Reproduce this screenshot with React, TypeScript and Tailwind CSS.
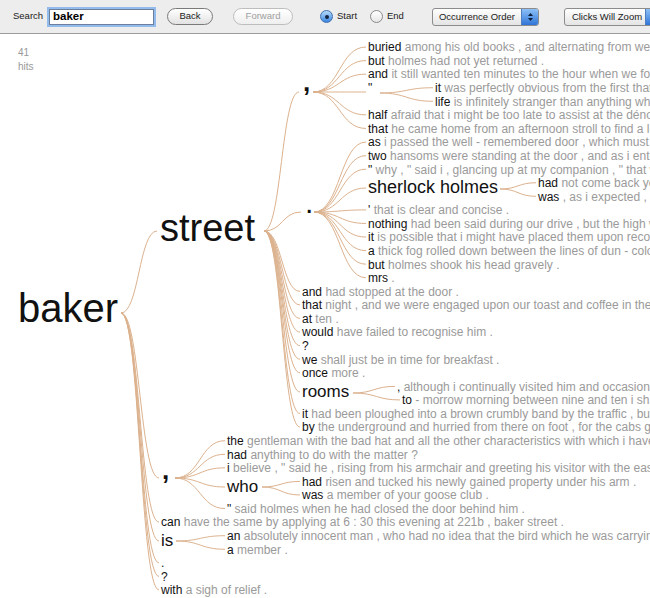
import React from 'react';

// word tree for "baker" — rows are laid out on a fixed 13.575px grid
const TOP = 34;
const ROW0 = 51.5;
const STEP = 13.575;
const base = (row: number) => ROW0 + (row - 1) * STEP;
const ASC = 0.8465; // baseline offset for leading-none Liberation Sans

type Pt = [number, number];

// out-anchors of every branching node
const OUT: Record<string, Pt> = {
  baker: [121, 313],
  street: [264, 231],
  comma1: [313, 92],
  quote: [380, 93],
  period: [314, 212],
  sherlock: [500, 189],
  rooms: [353, 393],
  comma2: [175, 478],
  who: [262, 487],
  is: [176, 541],
};

type Branch = { text: string; x: number; baseline: number; size: number; from: string; to: Pt; bold?: boolean };

const BRANCHES: Branch[] = [
  { text: 'street', x: 160, baseline: 241, size: 38, from: 'baker', to: [157, 231] },
  { text: ',', x: 303, baseline: 91, size: 26, from: 'street', to: [299, 92], bold: true },
  { text: '.', x: 305, baseline: 213, size: 30, from: 'street', to: [301, 212] },
  { text: 'sherlock holmes', x: 368, baseline: 193, size: 18, from: 'period', to: [366, 188] },
  { text: 'rooms', x: 302, baseline: 397, size: 17, from: 'street', to: [300, 392] },
  { text: ',', x: 162, baseline: 479, size: 26, from: 'baker', to: [159, 478], bold: true },
  { text: 'who', x: 227, baseline: 492, size: 17, from: 'comma2', to: [225, 487] },
  { text: 'is', x: 161, baseline: 546, size: 17, from: 'baker', to: [159, 541] },
];

type Leaf = { row: number; x: number; head: string; rest?: string; from: string; to?: Pt };

const LEAVES: Leaf[] = [
  { row: 1, x: 368, from: 'comma1', head: 'buried', rest: 'among his old books , and alternating from week to week between cocaine and ambition' },
  { row: 2, x: 368, from: 'comma1', head: 'but', rest: 'holmes had not yet returned .' },
  { row: 3, x: 368, from: 'comma1', head: 'and', rest: 'it still wanted ten minutes to the hour when we found ourselves in baker street' },
  { row: 4, x: 368, from: 'comma1', head: '"', to: [366, 92] },
  { row: 4, x: 435, from: 'quote', head: 'it', rest: 'was perfectly obvious from the first that there was something wrong' },
  { row: 5, x: 435, from: 'quote', head: 'life', rest: 'is infinitely stranger than anything which the mind of man could invent' },
  { row: 6, x: 368, from: 'comma1', head: 'half', rest: 'afraid that i might be too late to assist at the dénouement of the little mystery' },
  { row: 7, x: 368, from: 'comma1', head: 'that', rest: 'he came home from an afternoon stroll to find a letter on the table' },
  { row: 8, x: 368, from: 'period', head: 'as', rest: 'i passed the well - remembered door , which must always be associated in my mind' },
  { row: 9, x: 368, from: 'period', head: 'two', rest: 'hansoms were standing at the door , and as i entered the passage' },
  { row: 10, x: 368, from: 'period', head: '"', rest: 'why , " said i , glancing up at my companion , " that was surely' },
  { row: 11, x: 538, from: 'sherlock', head: 'had', rest: 'not come back yet .' },
  { row: 12, x: 538, from: 'sherlock', head: 'was', rest: ', as i expected , sitting in his armchair' },
  { row: 13, x: 368, from: 'period', head: "'", rest: 'that is clear and concise .' },
  { row: 14, x: 368, from: 'period', head: 'nothing', rest: 'had been said during our drive , but the high windows' },
  { row: 15, x: 368, from: 'period', head: 'it', rest: 'is possible that i might have placed them upon record' },
  { row: 16, x: 368, from: 'period', head: 'a', rest: 'thick fog rolled down between the lines of dun - coloured houses' },
  { row: 17, x: 368, from: 'period', head: 'but', rest: 'holmes shook his head gravely .' },
  { row: 18, x: 368, from: 'period', head: 'mrs', rest: '.' },
  { row: 19, x: 302, from: 'street', head: 'and', rest: 'had stopped at the door .' },
  { row: 20, x: 302, from: 'street', head: 'that', rest: 'night , and we were engaged upon our toast and coffee in the morning' },
  { row: 21, x: 302, from: 'street', head: 'at', rest: 'ten .' },
  { row: 22, x: 302, from: 'street', head: 'would', rest: 'have failed to recognise him .' },
  { row: 23, x: 302, from: 'street', head: '?' },
  { row: 24, x: 302, from: 'street', head: 'we', rest: 'shall just be in time for breakfast .' },
  { row: 25, x: 302, from: 'street', head: 'once', rest: 'more .' },
  { row: 26, x: 397, from: 'rooms', head: ',', rest: 'although i continually visited him and occasionally' },
  { row: 27, x: 402, from: 'rooms', head: 'to', rest: '- morrow morning between nine and ten i shall be' },
  { row: 28, x: 302, from: 'street', head: 'it', rest: 'had been ploughed into a brown crumbly band by the traffic , but' },
  { row: 29, x: 302, from: 'street', head: 'by', rest: 'the underground and hurried from there on foot , for the cabs go slowly' },
  { row: 30, x: 227, from: 'comma2', head: 'the', rest: 'gentleman with the bad hat and all the other characteristics with which i have' },
  { row: 31, x: 227, from: 'comma2', head: 'had', rest: 'anything to do with the matter ?' },
  { row: 32, x: 227, from: 'comma2', head: 'i', rest: 'believe , " said he , rising from his armchair and greeting his visitor with the easy' },
  { row: 33, x: 302, from: 'who', head: 'had', rest: 'risen and tucked his newly gained property under his arm .' },
  { row: 34, x: 302, from: 'who', head: 'was', rest: 'a member of your goose club .' },
  { row: 35, x: 227, from: 'comma2', head: '"', rest: 'said holmes when he had closed the door behind him .' },
  { row: 36, x: 161, from: 'baker', head: 'can', rest: 'have the same by applying at 6 : 30 this evening at 221b , baker street .' },
  { row: 37, x: 227, from: 'is', head: 'an', rest: 'absolutely innocent man , who had no idea that the bird which he was carrying' },
  { row: 38, x: 227, from: 'is', head: 'a', rest: 'member .' },
  { row: 39, x: 161, from: 'baker', head: '.' },
  { row: 40, x: 161, from: 'baker', head: '?' },
  { row: 41, x: 161, from: 'baker', head: 'with', rest: 'a sigh of relief .' },
];

function curve([x0, y0]: Pt, [x1, y1]: Pt) {
  const m = (x0 + x1) / 2;
  return `M${x0} ${y0 - TOP} C${m} ${y0 - TOP} ${m} ${y1 - TOP} ${x1} ${y1 - TOP}`;
}

function PopupButton({ label, className }: { label: string; className: string }) {
  return (
    <div className="flex h-[18px] shrink-0 items-stretch overflow-hidden rounded-[3px] border border-[#8c8c8c] bg-gradient-to-b from-white to-[#e4e4e4]">
      <span className={`text-center text-[9.5px] leading-[16px] text-[#1a1a1a] ${className}`}>{label}</span>
      <span className="flex w-[17px] shrink-0 flex-col items-center justify-center gap-[2px] border-l border-[#4f7fc0] bg-gradient-to-b from-[#8cc0f7] to-[#2f74d6]">
        <svg width="5" height="3" viewBox="0 0 5 3"><path d="M0 3 L2.5 0 L5 3 Z" fill="#0d1f3a" /></svg>
        <svg width="5" height="3" viewBox="0 0 5 3"><path d="M0 0 L2.5 3 L5 0 Z" fill="#0d1f3a" /></svg>
      </span>
    </div>
  );
}

function Radio({ on }: { on?: boolean }) {
  return on ? (
    <span className="flex h-[13px] w-[13px] shrink-0 items-center justify-center rounded-full border border-[#3f6fae] bg-gradient-to-b from-[#b7dbfb] to-[#3a86e0]">
      <span className="h-[4px] w-[4px] rounded-full bg-[#13243d]" />
    </span>
  ) : (
    <span className="h-[13px] w-[13px] shrink-0 rounded-full border border-[#8a8a8a] bg-gradient-to-b from-white to-[#e6e6e6]" />
  );
}

export default function App() {
  return (
    <div className="flex h-screen w-full flex-col overflow-hidden bg-white font-['Liberation_Sans',Arial,sans-serif]">
      {/* Toolbar */}
      <div className="flex h-[34px] shrink-0 items-center overflow-hidden border-b border-[#9c9c9c] bg-[#ededed] pl-[13px] text-[9.5px] text-[#222]">
        <span className="w-[30px] shrink-0">Search</span>
        <div className="ml-[6px] flex h-[16px] w-[105px] shrink-0 items-center border border-[#6a7f9c] bg-white pl-[3px] text-[11.5px] font-bold text-black shadow-[0_0_0_2px_#93bbec]">
          baker
        </div>
        <button className="ml-[13px] h-[17px] w-[46px] shrink-0 rounded-full border border-[#7a7a7a] bg-gradient-to-b from-white to-[#e2e2e2] text-[9.5px] text-[#222]">
          Back
        </button>
        <button className="ml-[20px] h-[17px] w-[60px] shrink-0 rounded-full border border-[#bdbdbd] bg-gradient-to-b from-white to-[#efefef] text-[9.5px] text-[#a0a0a0]">
          Forward
        </button>
        <span className="ml-[27px] shrink-0"><Radio on /></span>
        <span className="ml-[4px] w-[33px] shrink-0">Start</span>
        <Radio />
        <span className="ml-[4px] w-[45px] shrink-0">End</span>
        <PopupButton label="Occurrence Order" className="w-[88px]" />
        <span className="ml-[25px] shrink-0"><PopupButton label="Clicks Will Zoom" className="w-[80px] pl-[4px]" /></span>
      </div>

      {/* Tree canvas */}
      <div className="relative flex-1">
        <div className="pl-[18px] pt-[12px] text-[10px] leading-[14px] text-[#999]">
          <div>41</div>
          <div>hits</div>
        </div>

        <svg className="pointer-events-none absolute inset-0 h-full w-full" fill="none" stroke="#dcb28e" strokeWidth="1">
          {BRANCHES.map((b, i) => (
            <path key={`b${i}`} d={curve(OUT[b.from], b.to)} />
          ))}
          {LEAVES.map((l, i) => (
            <path key={`l${i}`} d={curve(OUT[l.from], l.to ?? [l.x - 2, base(l.row) - 4.5])} />
          ))}
        </svg>

        <div
          className="absolute whitespace-nowrap leading-none text-[#111]"
          style={{ left: 18, top: 322 - 40 * ASC - TOP, fontSize: 40 }}
        >
          baker
        </div>

        {BRANCHES.map((b, i) => (
          <div
            key={i}
            className={`absolute whitespace-nowrap leading-none text-[#111] ${b.bold ? 'font-bold' : ''}`}
            style={{ left: b.x, top: b.baseline - b.size * ASC - TOP, fontSize: b.size }}
          >
            {b.text}
          </div>
        ))}

        {LEAVES.map((l, i) => (
          <div
            key={i}
            className="absolute whitespace-nowrap text-[12px] leading-none"
            style={{ left: l.x, top: base(l.row) - 12 * ASC - TOP }}
          >
            <span className="text-[#111]">{l.head}</span>
            {l.rest && <span className="text-[#9a9a9a]"> {l.rest}</span>}
          </div>
        ))}
      </div>
    </div>
  );
}
